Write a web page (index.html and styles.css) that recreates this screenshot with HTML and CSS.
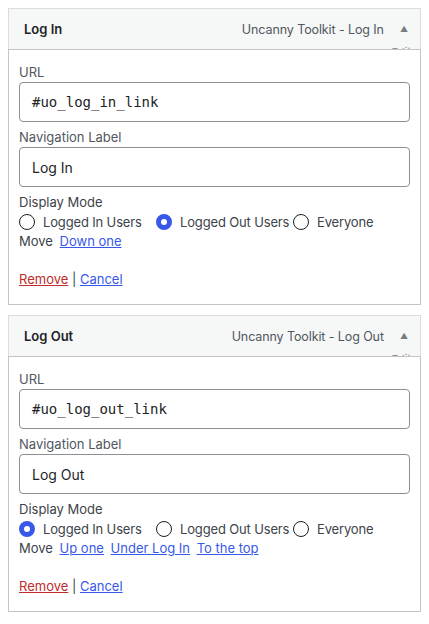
FILE: index.html
```html
<!DOCTYPE html>
<html>
<head>
<meta charset="utf-8">
<link rel="stylesheet" href="styles.css">
</head>
<body>
<div class="menu">
  <div class="item">
    <div class="item-bar">
      <span class="item-title">Log In</span>
      <span class="item-controls"><span class="item-type">Uncanny Toolkit - Log In</span><span class="arrow">▲</span></span>
      <span class="item-edit">Edit</span>
    </div>
    <div class="settings">
      <div class="field">
        <label class="lbl">URL</label>
        <div class="input mono">#uo_log_in_link</div>
      </div>
      <div class="field">
        <label class="lbl">Navigation Label</label>
        <div class="input">Log In</div>
      </div>
      <div class="lbl dark">Display Mode</div>
      <div class="radios">
        <span class="opt"><span class="radio"></span>Logged In Users</span>
        <span class="opt"><span class="radio on"></span>Logged Out Users</span>
        <span class="opt"><span class="radio"></span>Everyone</span>
      </div>
      <div class="move">Move <a href="#">Down one</a></div>
      <div class="actions"><a href="#" class="remove">Remove</a> | <a href="#">Cancel</a></div>
    </div>
  </div>
  <div class="item">
    <div class="item-bar">
      <span class="item-title">Log Out</span>
      <span class="item-controls"><span class="item-type">Uncanny Toolkit - Log Out</span><span class="arrow">▲</span></span>
      <span class="item-edit">Edit</span>
    </div>
    <div class="settings">
      <div class="field">
        <label class="lbl">URL</label>
        <div class="input mono">#uo_log_out_link</div>
      </div>
      <div class="field">
        <label class="lbl">Navigation Label</label>
        <div class="input">Log Out</div>
      </div>
      <div class="lbl dark">Display Mode</div>
      <div class="radios">
        <span class="opt"><span class="radio on"></span>Logged In Users</span>
        <span class="opt"><span class="radio"></span>Logged Out Users</span>
        <span class="opt"><span class="radio"></span>Everyone</span>
      </div>
      <div class="move">Move <a href="#">Up one</a> <a href="#">Under Log In</a> <a href="#">To the top</a></div>
      <div class="actions"><a href="#" class="remove">Remove</a> | <a href="#">Cancel</a></div>
    </div>
  </div>
</div>
</body>
</html>
```

FILE: styles.css
```css
* { box-sizing: border-box; }
html, body { margin: 0; background: #fff; }
body {
  padding: 8px;
  font-family: Inter, "Noto Sans", sans-serif;
  font-size: 13px;
  color: #1d2327;
}
.menu { width: 413px; display: flex; flex-direction: column; gap: 10px; }
.item { display: flex; flex-direction: column; }
.item-bar {
  position: relative;
  height: 41px;
  background: #f6f7f7;
  border: 1px solid #dcdcde;
  border-bottom: none;
  display: flex;
  align-items: center;
  justify-content: space-between;
  padding: 0 12px 0 15px;
}
.item-title { font-weight: 600; font-size: 13px; color: #1d2327; }
.item-controls { display: flex; align-items: center; gap: 16px; color: #50575e; font-size: 12.5px; }
.item-type { letter-spacing: -0.1px; }
.arrow { font-size: 8px; color: #787c82; }
.item-edit {
  position: absolute;
  right: 9px;
  top: 36px;
  font-size: 11px;
  color: #8c8f94;
}
.settings {
  position: relative;
  z-index: 1;
  background: #fff;
  border: 1px solid #c3c4c7;
  padding: 12px 10px 15px 10px;
}
.field { margin-bottom: 5px; }
.lbl { display: block; line-height: 20px; color: #50575e; font-size: 13px; }
.lbl.dark { color: #3c434a; }
.input {
  height: 40px;
  border: 1px solid #8c8f94;
  border-radius: 4px;
  padding: 0 12px;
  display: flex;
  align-items: center;
  font-size: 14px;
  color: #1d2327;
}
.mono { font-family: "DejaVu Sans Mono", monospace; font-size: 14px; }
.radios { display: flex; height: 19px; align-items: center; color: #3c434a; }
.opt { display: flex; align-items: center; gap: 8px; width: 137px; white-space: nowrap; letter-spacing: -0.15px; }
.opt:last-child { width: auto; }
.radio {
  width: 16px; height: 16px; border-radius: 50%;
  border: 1px solid #1e1e1e;
  flex: none;
}
.radio.on { border: 5px solid #3858e9; }
.move { line-height: 20px; color: #3c434a; }
.move a { margin-left: 3px; }
a { color: #3858e9; text-decoration: underline; text-decoration-thickness: 1px; }
.actions { margin-top: 18px; line-height: 20px; color: #3c434a; }
a.remove { color: #c02b2b; }
```
